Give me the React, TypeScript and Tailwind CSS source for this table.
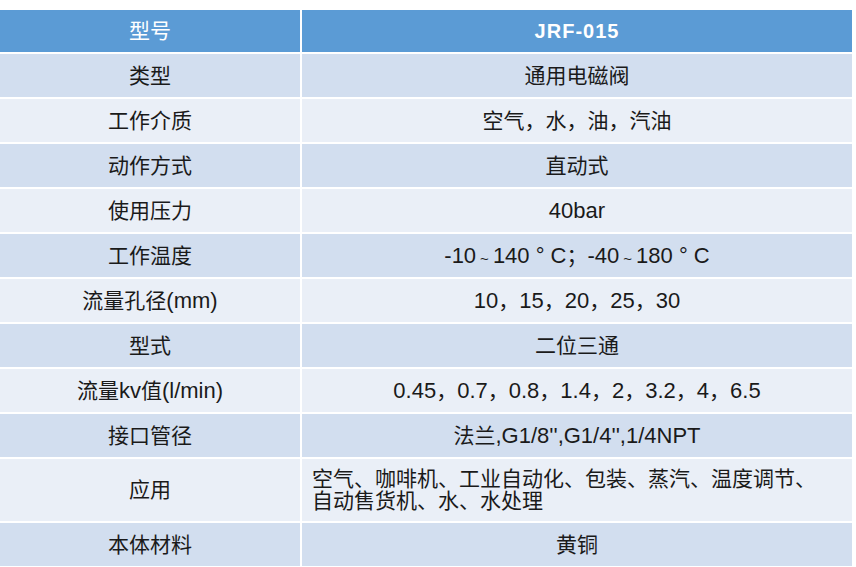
import React from "react";

// CJK runs get 21px, latin runs 22px (matches the reference's mixed widths)
function mix(s: string) {
  const parts = s.split(/([\u3000-\u9fff\uff00-\uffef]+)/);
  return parts.map((p, i) =>
    /[\u3000-\u9fff\uff00-\uffef]/.test(p) ? (
      <span key={i} className="text-[21px]">
        {p}
      </span>
    ) : (
      <span key={i}>{p}</span>
    ),
  );
}

const Tilde = () => <span className="text-[15px] mx-[4px] relative top-[1px]">~</span>;

const rows: { label: string; value: React.ReactNode; tall?: boolean }[] = [
  { label: "类型", value: mix("通用电磁阀") },
  { label: "工作介质", value: mix("空气，水，油，汽油") },
  { label: "动作方式", value: mix("直动式") },
  { label: "使用压力", value: "40bar" },
  {
    label: "工作温度",
    value: (
      <span>
        -10
        <Tilde />
        140 ° C
        <span className="text-[21px]">；</span>-40
        <Tilde />
        180 ° C
      </span>
    ),
  },
  { label: "流量孔径(mm)", value: mix("10，15，20，25，30") },
  { label: "型式", value: mix("二位三通") },
  { label: "流量kv值(l/min)", value: mix("0.45，0.7，0.8，1.4，2，3.2，4，6.5") },
  { label: "接口管径", value: mix("法兰,G1/8'',G1/4'',1/4NPT") },
  {
    label: "应用",
    value: (
      <div className="text-left text-[21px] leading-[22px]">
        空气、咖啡机、工业自动化、包装、蒸汽、温度调节、
        <br />
        自动售货机、水、水处理
      </div>
    ),
    tall: true,
  },
  { label: "本体材料", value: mix("黄铜") },
];

export default function App() {
  return (
    <div
      className="w-[856px] h-[567px] bg-white pt-[10px] overflow-hidden"
      style={{ fontFamily: '"Liberation Sans", "Noto Sans CJK SC", sans-serif' }}
    >
      <div className="grid grid-cols-[300px_550px] gap-[2px] text-[22px] text-[#1a1a1a]">
        <div className="h-[42px] bg-[#5b9bd5] text-white text-[21px] flex items-center justify-center">
          型号
        </div>
        <div className="h-[42px] bg-[#5b9bd5] text-white text-[20px] font-bold flex items-center justify-center tracking-[1px]">
          JRF-015
        </div>
        {rows.map((r, i) => {
          const bg = i % 2 === 0 ? "bg-[#d2deef]" : "bg-[#eaeff7]";
          const h = r.tall ? "h-[62px]" : "h-[43px]";
          return (
            <React.Fragment key={r.label}>
              <div className={`${bg} ${h} flex items-center justify-center`}>
                {mix(r.label)}
              </div>
              <div
                className={`${bg} ${h} flex items-center ${r.tall ? "justify-start pl-[10px]" : "justify-center"}`}
              >
                {r.value}
              </div>
            </React.Fragment>
          );
        })}
      </div>
    </div>
  );
}
